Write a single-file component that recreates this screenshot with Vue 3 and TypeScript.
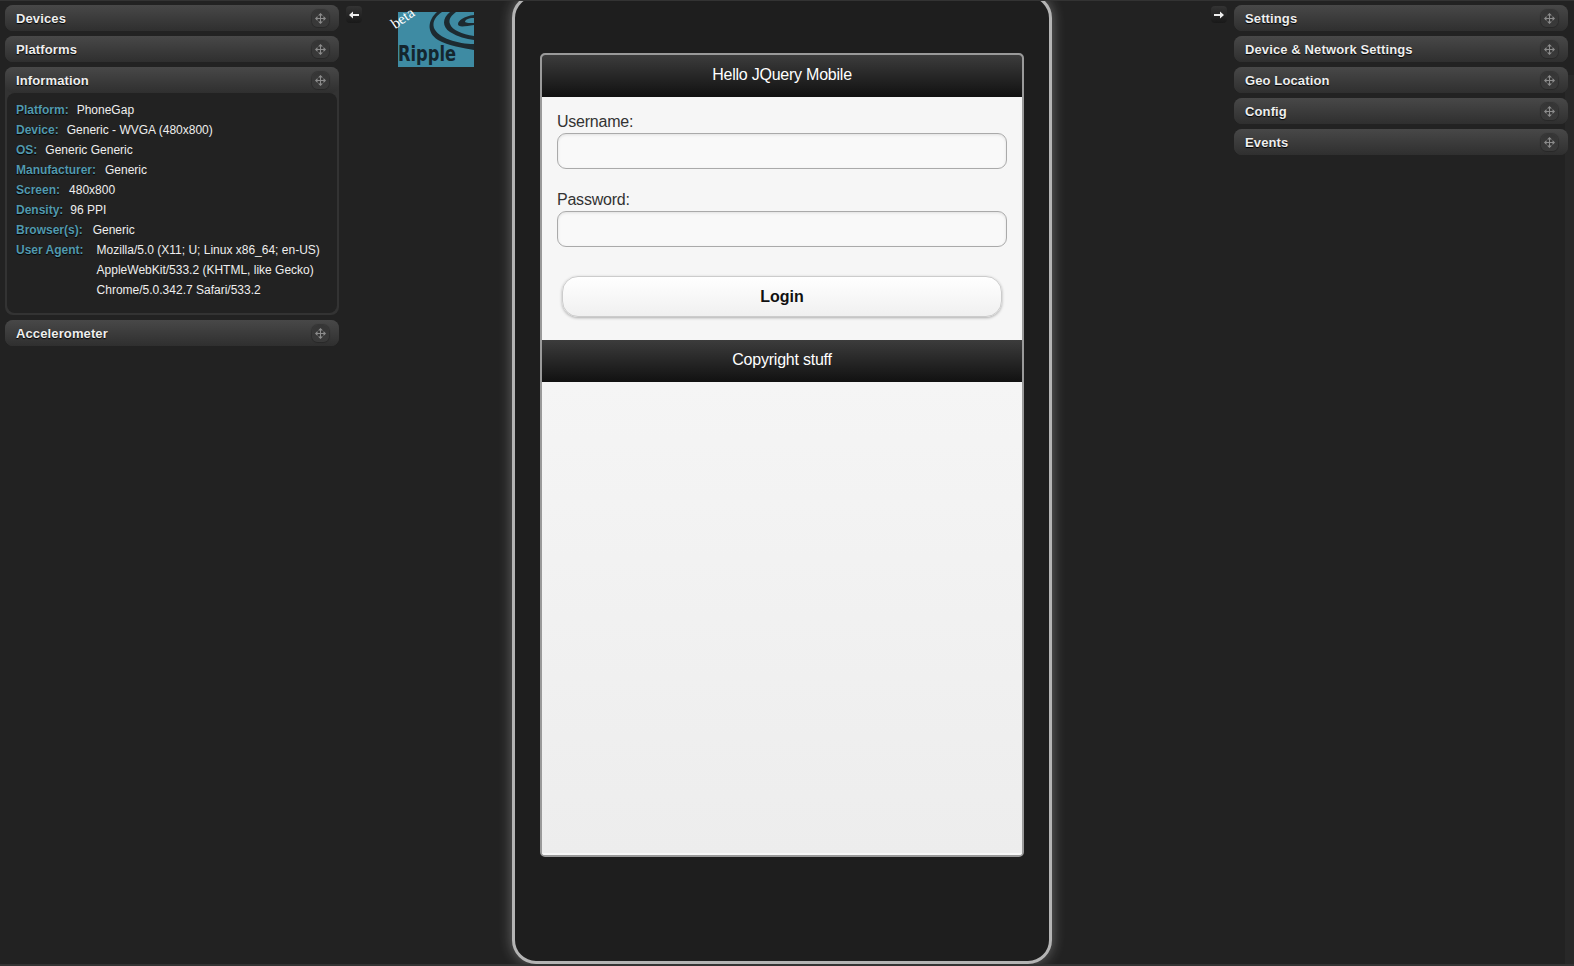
<script setup lang="ts">
type InfoRow = { label: string; gap: number; value: string[] }

const leftTop = ['Devices', 'Platforms']
const rightPanels = ['Settings', 'Device & Network Settings', 'Geo Location', 'Config', 'Events']

const gripPath =
  'M5.500 0 8 2.500H6V5H8.500V3L11 5.500 8.500 8V6H6V8.500H8L5.500 11 3 8.500H5V6H2.500V8L0 5.500 2.500 3V5H5V2.500H3Z'

const infoRows: InfoRow[] = [
  { label: 'Platform:', gap: 8, value: ['PhoneGap'] },
  { label: 'Device:', gap: 8, value: ['Generic - WVGA (480x800)'] },
  { label: 'OS:', gap: 8, value: ['Generic Generic'] },
  { label: 'Manufacturer:', gap: 9, value: ['Generic'] },
  { label: 'Screen:', gap: 9, value: ['480x800'] },
  { label: 'Density:', gap: 7, value: ['96 PPI'] },
  { label: 'Browser(s):', gap: 10, value: ['Generic'] },
  {
    label: 'User Agent:',
    gap: 13,
    value: [
      'Mozilla/5.0 (X11; U; Linux x86_64; en-US)',
      'AppleWebKit/533.2 (KHTML, like Gecko)',
      'Chrome/5.0.342.7 Safari/533.2',
    ],
  },
]
</script>

<template>
  <div class="shell">
    <aside class="col col-left">
      <section v-for="name in leftTop" :key="name" class="panel">
        <header class="panel-head">
          <span>{{ name }}</span>
          <span class="grip">
            <svg width="11" height="11" viewBox="0 0 11 11"><path :d="gripPath" /></svg>
          </span>
        </header>
      </section>

      <section class="panel">
        <header class="panel-head">
          <span>Information</span>
          <span class="grip">
            <svg width="11" height="11" viewBox="0 0 11 11"><path :d="gripPath" /></svg>
          </span>
        </header>
        <div class="panel-body">
          <div v-for="row in infoRows" :key="row.label" class="info-row">
            <span class="info-label" :style="{ marginRight: `${row.gap}px` }">{{ row.label }}</span>
            <div class="info-value">
              <div v-for="line in row.value" :key="line">{{ line }}</div>
            </div>
          </div>
        </div>
      </section>

      <section class="panel">
        <header class="panel-head">
          <span>Accelerometer</span>
          <span class="grip">
            <svg width="11" height="11" viewBox="0 0 11 11"><path :d="gripPath" /></svg>
          </span>
        </header>
      </section>
    </aside>

    <main class="stage">
      <button class="nudge nudge-left" type="button" aria-label="Collapse left">
        <svg width="10" height="8" viewBox="0 0 10 8"><path d="M0 4 4 .5V3h6v2H4v2.500z" /></svg>
      </button>
      <button class="nudge nudge-right" type="button" aria-label="Collapse right">
        <svg width="10" height="8" viewBox="0 0 10 8"><path d="M10 4 6 .5V3H0v2h6v2.500z" /></svg>
      </button>

      <div class="logo">
        <svg width="76" height="55" viewBox="0 0 76 55">
          <rect width="76" height="55" fill="#3e8ba3" />
          <path class="swirl" d="M39 0C30 8 28 20 40 28C50 34 66 36 76 38V32C60 32 40 26 36 16C34 9 38 4 44 0Z" />
          <path class="swirl" d="M52 0C44 6 44 15 52 20C60 25 68 27 76 28V24C64 22 54 18 52 12C50 7 54 3 58 0Z" />
          <path class="swirl" d="M76 3C66 4 60 9 60 12C60 16 68 14 76 13V11C72 11 68 11 67 10C67 8 70 6 76 6Z" />
          <text class="logo-word" x="0" y="49" textLength="58" lengthAdjust="spacingAndGlyphs">Ripple</text>
        </svg>
        <span class="beta">beta</span>
      </div>

      <div class="phone">
        <div class="screen">
          <div class="bar bar-head">Hello JQuery Mobile</div>
          <form class="form" @submit.prevent>
            <label class="field">
              <span>Username:</span>
              <input type="text" />
            </label>
            <label class="field">
              <span>Password:</span>
              <input type="password" />
            </label>
            <button class="login" type="button">Login</button>
          </form>
          <div class="bar bar-foot">Copyright stuff</div>
          <div class="rest"></div>
        </div>
      </div>
    </main>

    <aside class="col col-right">
      <div class="track"></div>
      <section v-for="name in rightPanels" :key="name" class="panel">
        <header class="panel-head">
          <span>{{ name }}</span>
          <span class="grip">
            <svg width="11" height="11" viewBox="0 0 11 11"><path :d="gripPath" /></svg>
          </span>
        </header>
      </section>
    </aside>
  </div>
</template>

<style scoped>
.shell {
  display: flex;
  height: 966px;
  overflow: hidden;
  background: #222;
  border-top: 1px solid #333;
  border-bottom: 2px solid #333;
  box-sizing: border-box;
  font-family: "Liberation Sans", Arial, sans-serif;
}

.col {
  flex: none;
  display: flex;
  flex-direction: column;
  gap: 5px;
  padding-top: 4px;
  box-sizing: border-box;
}

.col-left {
  width: 345px;
  padding-left: 5px;
  padding-right: 6px;
}

.col-right {
  position: relative;
  width: 355px;
  padding-left: 15px;
  padding-right: 6px;
}

.track {
  position: absolute;
  top: 74px;
  right: 0;
  bottom: 0;
  width: 9px;
  background: #282828;
}

.panel {
  position: relative;
  background: #333;
  border-radius: 8px;
}

.panel-head {
  height: 26px;
  display: flex;
  align-items: center;
  justify-content: space-between;
  padding: 0 10px 0 11px;
  border-radius: 8px;
  background: linear-gradient(#484848, #2f2f2f);
  color: #eee;
  font-size: 13px;
  font-weight: 700;
  letter-spacing: 0.12px;
  text-shadow: 0 1px 1px #000;
}

.grip {
  width: 17px;
  height: 17px;
  display: flex;
  align-items: center;
  justify-content: center;
  border-radius: 6px;
  background: linear-gradient(#353535, #3a3a3a);
  box-shadow: 0 0 1px 1px rgba(0, 0, 0, 0.22);
}

.grip svg {
  fill: #8c8c8c;
}

.panel-body {
  margin: 0 2px 2px;
  padding: 7px 9px 13px;
  background: #222;
  border-radius: 8px;
  color: #eee;
  font-size: 12px;
  line-height: 20px;
}

.info-row {
  display: flex;
}

.info-label {
  flex: none;
  font-weight: 700;
  color: #5299ae;
  text-shadow: 0 1px 1px #000;
}

.stage {
  flex: 1;
  position: relative;
  display: flex;
  justify-content: center;
}

.nudge {
  position: absolute;
  top: 5px;
  width: 16px;
  height: 17px;
  padding: 0;
  display: flex;
  align-items: center;
  justify-content: center;
  border: 0;
  border-radius: 4px;
  background: linear-gradient(#333, #191919);
}

.nudge svg {
  fill: #eee;
}

.nudge-left {
  left: 1px;
}

.nudge-right {
  right: -8px;
}

.logo {
  position: absolute;
  left: 53px;
  top: 11px;
  width: 76px;
  height: 55px;
}

.swirl {
  fill: #1d2a30;
}

.logo-word {
  font-family: "DejaVu Sans", sans-serif;
  font-size: 21px;
  font-weight: 700;
  fill: #14262e;
}

.beta {
  position: absolute;
  left: -8px;
  top: -2px;
  font-family: "Liberation Serif", serif;
  font-size: 15px;
  line-height: 16px;
  color: #fff;
  transform: rotate(-35deg);
}

.phone {
  flex: none;
  width: 540px;
  height: 970px;
  margin-top: -7px;
  padding-top: 56px;
  box-sizing: border-box;
  display: flex;
  justify-content: center;
  align-items: flex-start;
  background: #1e1e1e;
  border: 3px solid #b4b4b4;
  border-radius: 24px;
  box-shadow: 0 0 14px rgba(255, 255, 255, 0.32);
}

.screen {
  width: 484px;
  height: 804px;
  display: flex;
  flex-direction: column;
  box-sizing: border-box;
  border: 2px solid #9a9a9a;
  border-radius: 5px;
  overflow: hidden;
  background: #f6f6f6;
  color: #333;
  font-size: 16px;
  letter-spacing: -0.23px;
}

.bar {
  flex: none;
  display: flex;
  align-items: center;
  justify-content: center;
  box-sizing: border-box;
  color: #fff;
  background: linear-gradient(#3c3c3c, #111);
}

.bar-head {
  height: 42px;
  padding-bottom: 2px;
}

.bar-foot {
  height: 42px;
  padding-bottom: 2px;
}

.form {
  flex: none;
  height: 243px;
  box-sizing: border-box;
  padding: 16px 15px 0;
  display: flex;
  flex-direction: column;
}

.field {
  display: flex;
  flex-direction: column;
  gap: 2px;
  margin-bottom: 22px;
  line-height: 18px;
}

.field input {
  width: 100%;
  height: 36px;
  box-sizing: border-box;
  border: 1px solid #aaa;
  border-radius: 9px;
  background: #f9f9f9;
  box-shadow: inset 0 1px 3px rgba(0, 0, 0, 0.1);
}

.login {
  align-self: center;
  width: 440px;
  height: 41px;
  margin-top: 7px;
  border: 1px solid #ccc;
  border-radius: 16px;
  background: linear-gradient(#fff, #f0f0f0);
  box-shadow: 0 1px 3px rgba(0, 0, 0, 0.3);
  color: #111;
  font-family: inherit;
  font-size: 16px;
  font-weight: 700;
}

.rest {
  flex: 1;
  background: linear-gradient(#f5f5f5, #ededed);
  box-shadow: inset 0 -2px 0 #f8f8f8;
}
</style>

<style>
html,
body {
  margin: 0;
  background: #222;
  overflow: hidden;
}
</style>
